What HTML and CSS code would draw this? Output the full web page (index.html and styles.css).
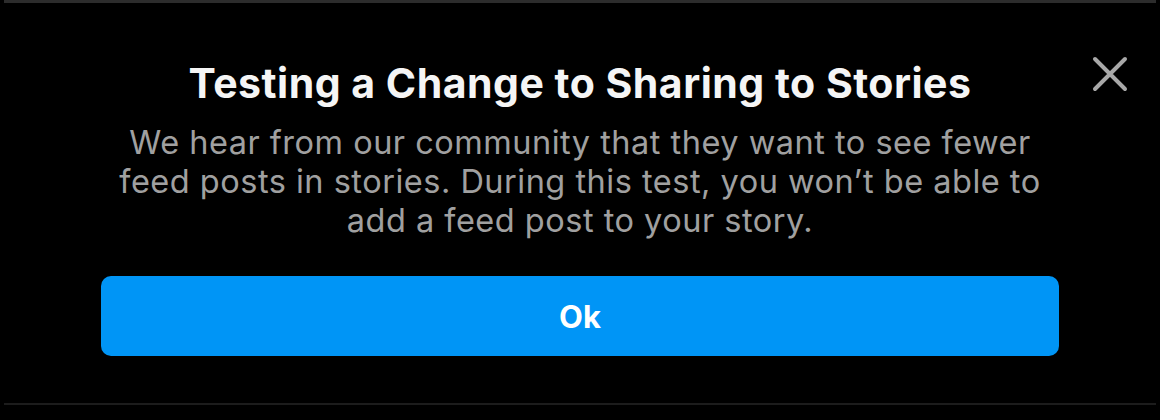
FILE: index.html
```html
<!DOCTYPE html>
<html>
<head>
<meta charset="utf-8">
<link rel="stylesheet" href="styles.css">
</head>
<body>
<div class="screen">
  <div class="top-line"></div>
  <div class="dialog">
    <button class="close" aria-label="Close">
      <svg width="36" height="36" viewBox="0 0 36 36"><path d="M3 3 L33 33 M33 3 L3 33" stroke="#a8a8a8" stroke-width="4" stroke-linecap="round"/></svg>
    </button>
    <h1 class="title">Testing a Change to Sharing to Stories</h1>
    <p class="body">We hear from our community that they want to see fewer feed posts in stories. During this test, you won’t be able to add a feed post to your story.</p>
    <button class="ok">Ok</button>
  </div>
  <div class="bottom-line"></div>
</div>
</body>
</html>
```
FILE: styles.css
```css
html, body {
  margin: 0;
  padding: 0;
  background: #000;
}
.screen {
  width: 1160px;
  height: 420px;
  display: flex;
  flex-direction: column;
  font-family: Inter, "Noto Sans", sans-serif;
}
.top-line {
  height: 3px;
  margin: 0 4px;
  background: #2c2c2c;
}
.bottom-line {
  height: 2px;
  margin: 0 4px;
  background: #1c1c1c;
}
.dialog {
  position: relative;
  height: 400px;
  display: flex;
  flex-direction: column;
  align-items: center;
}
.close {
  position: absolute;
  right: 32px;
  top: 53px;
  width: 36px;
  height: 36px;
  padding: 0;
  border: 0;
  background: none;
  display: flex;
}
.title {
  margin: 56px 0 0;
  font-size: 41px;
  font-weight: 700;
  line-height: 48px;
  color: #f5f5f5;
  letter-spacing: 0.5px;
}
.body {
  margin: 16px 0 0;
  width: 945px;
  text-align: center;
  font-size: 32.5px;
  font-weight: 400;
  line-height: 39px;
  color: #a0a0a0;
  letter-spacing: 0.5px;
}
.ok {
  margin-top: 36px;
  width: 958px;
  height: 80px;
  border: 0;
  border-radius: 10px;
  background: #0095f6;
  color: #fff;
  font-family: inherit;
  font-size: 31px;
  font-weight: 700;
}
```
